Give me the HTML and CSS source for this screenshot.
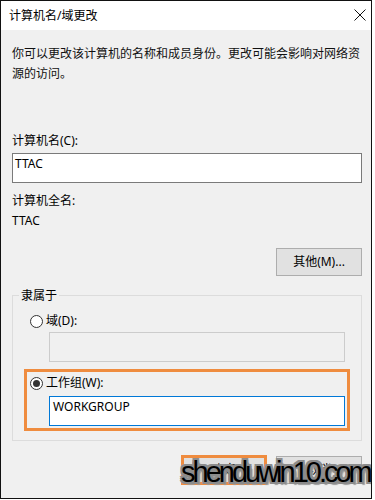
FILE: index.html
```html
<!DOCTYPE html>
<html lang="zh-CN">
<head>
<meta charset="utf-8">
<title>计算机名/域更改</title>
<link rel="stylesheet" href="styles.css">
</head>
<body>
<div class="window">
  <div class="titlebar">
    <span class="title">计算机名/域更改</span>
    <svg class="close" width="12" height="12" viewBox="0 0 12 12"><path d="M0.5 0.5L11.5 11.5M11.5 0.5L0.5 11.5" stroke="#111" stroke-width="1" fill="none"/></svg>
  </div>
  <div class="content">
    <p class="desc">你可以更改该计算机的名称和成员身份。更改可能会影响对网络资源的访问。</p>
    <div class="label label-name">计算机名(C):</div>
    <div class="field field-name">TTAC</div>
    <div class="label label-full">计算机全名:</div>
    <div class="value">TTAC</div>
    <div class="row-right"><button class="btn">其他(M)...</button></div>
    <fieldset class="group">
      <legend class="legend">隶属于</legend>
      <div class="radio radio-domain"><span class="dot"></span>域(D):</div>
      <div class="field field-disabled"></div>
      <div class="highlight">
        <div class="radio radio-work"><span class="dot checked"></span>工作组(W):</div>
        <div class="field field-focus">WORKGROUP</div>
      </div>
    </fieldset>
    <div class="actions">
      <button class="btn btn-ok">确定</button>
      <button class="btn">取消</button>
    </div>
  </div>
  <div class="watermark">shenduwin10.com</div>
</div>
</body>
</html>
```
FILE: styles.css
```css
html, body {
  margin: 0;
  padding: 0;
  background: #ffffff;
}
body {
  font-family: "Noto Sans", "Noto Sans CJK SC", sans-serif;
  font-size: 12px;
  color: #000;
}
.window {
  position: relative;
  width: 372px;
  height: 499px;
  box-sizing: border-box;
  border: 1px solid #111;
  display: flex;
  flex-direction: column;
  overflow: hidden;
}
.titlebar {
  height: 29px;
  background: #fff;
  display: flex;
  align-items: center;
  justify-content: space-between;
  padding: 0 5px 0 8px;
  flex: none;
}
.title {
  line-height: 18px;
}
.close {
  display: block;
  margin-bottom: 1px;
}
.content {
  flex: 1;
  background: #f0f0f0;
  padding: 14px 9px 0 11px;
}
.desc {
  margin: 0;
  line-height: 20px;
  color: #111;
}
.label, .value {
  line-height: 18px;
}
.label-name { margin-top: 48px; }
.label-full { margin-top: 9px; }
.value { margin-top: 2px; }
.field {
  box-sizing: border-box;
  height: 30px;
  border: 1px solid #7a7a7a;
  background: #fff;
  line-height: 18px;
  padding: 1px 3px 0 2px;
}
.field-name { margin-top: 3px; }
.row-right {
  display: flex;
  justify-content: flex-end;
  margin-top: 18px;
}
.btn {
  font-family: inherit;
  font-size: 12px;
  color: #000;
  width: 86px;
  height: 28px;
  box-sizing: border-box;
  background: #e1e1e1;
  border: 1px solid #adadad;
  padding: 0;
  margin: 0;
  line-height: 18px;
}
.group {
  margin: 11px 0 0 0;
  padding: 0 0 9px 0;
  border: 1px solid #dcdcdc;
  min-inline-size: 0;
}
.legend {
  margin-left: 6px;
  padding: 0 2px;
  line-height: 17px;
}
.radio {
  display: flex;
  align-items: center;
  height: 18px;
  line-height: 18px;
}
.radio-domain {
  margin: 8px 0 0 17px;
}
.radio-work {
  margin: 2px 0 0 3px;
}
.dot {
  width: 13px;
  height: 13px;
  box-sizing: border-box;
  border: 1px solid #333;
  border-radius: 50%;
  background: #fff;
  margin-right: 3px;
  display: flex;
  align-items: center;
  justify-content: center;
}
.dot.checked::after {
  content: "";
  width: 7px;
  height: 7px;
  border-radius: 50%;
  background: #333;
}
.field-disabled {
  margin: 2px 0 0 36px;
  width: 296px;
  border-color: #cccccc;
  background: #f0f0f0;
}
.highlight {
  margin: 7px 11px 0 11px;
  border: 3px solid #ef8c3f;
  padding: 0 0 2px 0;
}
.field-focus {
  margin: 4px 0 0 22px;
  width: 296px;
  border-color: #0078d7;
  padding-left: 3px;
  padding-top: 1px;
}
.actions {
  display: flex;
  justify-content: flex-end;
  align-items: center;
  gap: 9px;
  margin-top: 14px;
}
.btn-ok {
  height: 30px;
  border: 3px solid #ef8c3f;
}
.watermark {
  position: absolute;
  left: 180px;
  top: 457px;
  font-family: "Liberation Sans", sans-serif;
  font-size: 29px;
  line-height: 29px;
  letter-spacing: -3px;
  color: #000;
  white-space: nowrap;
  text-shadow:
    2px 0 0 #8c8c8c, -2px 0 0 #8c8c8c, 0 2px 0 #8c8c8c, 0 -2px 0 #8c8c8c,
    2px 2px 0 #8c8c8c, -2px -2px 0 #8c8c8c, 2px -2px 0 #8c8c8c, -2px 2px 0 #8c8c8c,
    3px 3px 1px #9a9a9a;
}
```
